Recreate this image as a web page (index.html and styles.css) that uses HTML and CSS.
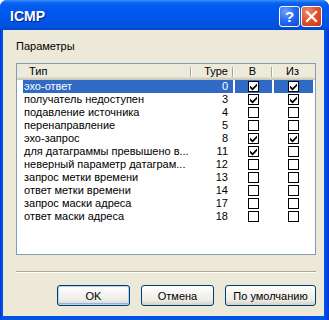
FILE: index.html
```html
<!DOCTYPE html>
<html lang="ru">

<head>
  <meta charset="UTF-8" />
  <title>ICMP</title>
  <link rel="stylesheet" href="styles.css">
</head>

<body>
  <div class="window">
    <div class="titlebar">
      <span class="title">ICMP</span>
      <div class="tb-buttons">
        <span class="tb-btn help">?</span>
        <span class="tb-btn close">
          <svg width="13" height="13" viewBox="0 0 13 13">
            <path d="M2 2 L11 11 M11 2 L2 11" stroke="#fff" stroke-width="2.2" stroke-linecap="square" />
          </svg>
        </span>
      </div>
    </div>

    <div class="client">
      <div class="label">Параметры</div>

      <div class="listbox">
        <div class="header">
          <div class="h h-name">Тип</div>
          <div class="h h-num">Type</div>
          <div class="h h-chk">В</div>
          <div class="h h-chk last">Из</div>
        </div>

        <div class="row sel">
          <div class="c name">эхо-ответ</div>
          <div class="c num">0</div>
          <div class="c chk"><span class="box on"></span></div>
          <div class="c chk"><span class="box on"></span></div>
        </div>
        <div class="row">
          <div class="c name">получатель недоступен</div>
          <div class="c num">3</div>
          <div class="c chk"><span class="box on"></span></div>
          <div class="c chk"><span class="box on"></span></div>
        </div>
        <div class="row">
          <div class="c name">подавление источника</div>
          <div class="c num">4</div>
          <div class="c chk"><span class="box"></span></div>
          <div class="c chk"><span class="box"></span></div>
        </div>
        <div class="row">
          <div class="c name">перенаправление</div>
          <div class="c num">5</div>
          <div class="c chk"><span class="box"></span></div>
          <div class="c chk"><span class="box"></span></div>
        </div>
        <div class="row">
          <div class="c name">эхо-запрос</div>
          <div class="c num">8</div>
          <div class="c chk"><span class="box on"></span></div>
          <div class="c chk"><span class="box on"></span></div>
        </div>
        <div class="row">
          <div class="c name">для датаграммы превышено в...</div>
          <div class="c num">11</div>
          <div class="c chk"><span class="box on"></span></div>
          <div class="c chk"><span class="box"></span></div>
        </div>
        <div class="row">
          <div class="c name">неверный параметр датаграм...</div>
          <div class="c num">12</div>
          <div class="c chk"><span class="box"></span></div>
          <div class="c chk"><span class="box"></span></div>
        </div>
        <div class="row">
          <div class="c name">запрос метки времени</div>
          <div class="c num">13</div>
          <div class="c chk"><span class="box"></span></div>
          <div class="c chk"><span class="box"></span></div>
        </div>
        <div class="row">
          <div class="c name">ответ метки времени</div>
          <div class="c num">14</div>
          <div class="c chk"><span class="box"></span></div>
          <div class="c chk"><span class="box"></span></div>
        </div>
        <div class="row">
          <div class="c name">запрос маски адреса</div>
          <div class="c num">17</div>
          <div class="c chk"><span class="box"></span></div>
          <div class="c chk"><span class="box"></span></div>
        </div>
        <div class="row">
          <div class="c name">ответ маски адреса</div>
          <div class="c num">18</div>
          <div class="c chk"><span class="box"></span></div>
          <div class="c chk"><span class="box"></span></div>
        </div>
      </div>

      <div class="separator"></div>

      <div class="buttons">
        <button class="btn default">OK</button>
        <button class="btn">Отмена</button>
        <button class="btn wide">По умолчанию</button>
      </div>
    </div>
  </div>
</body>

</html>
```

FILE: styles.css
```css
body {
  margin: 0;
  background: #fff;
  font-family: "Liberation Sans", Arial, sans-serif;
  font-size: 11px;
}

.window {
  width: 329px;
  height: 320px;
  box-sizing: border-box;
  border-radius: 7px 7px 0 0;
  background: linear-gradient(to right, #0831D9 0, #0055E5 2px, #0055E5 325px, #0831D9 329px);
  display: flex;
  flex-direction: column;
}

.titlebar {
  height: 30px;
  flex: none;
  border-radius: 7px 7px 0 0;
  background: linear-gradient(#3C8FFB 0, #0A62EF 3px, #005BF0 7px, #0058EE 14px, #0054E6 22px, #0050DC 27px, #0046D0 30px);
  display: flex;
  align-items: center;
  justify-content: space-between;
  padding: 0 7px 0 10px;
}

.title {
  color: #fff;
  font-weight: bold;
  font-size: 14px;
  text-shadow: 1px 1px 0 #0A1883;
  padding-top: 1px;
}

.tb-buttons {
  display: flex;
  gap: 1px;
  padding-top: 2px;
}

.tb-btn {
  width: 19px;
  height: 19px;
  border: 1px solid #fff;
  border-radius: 3px;
  display: flex;
  align-items: center;
  justify-content: center;
  color: #fff;
  font-weight: bold;
  font-size: 15px;
}

.help {
  background: radial-gradient(circle at 30% 25%, #6FA3FF 0, #2A6BF2 45%, #1246D8 100%);
}

.close {
  background: radial-gradient(circle at 30% 25%, #F08C6C 0, #E2542D 45%, #C23A12 100%);
}

.client {
  flex: 1;
  margin: 0 5px 4px 3px;
  background: #ECE9D8;
  padding: 0 0 0 13px;
}

.label {
  margin-top: 10px;
  line-height: 13px;
  color: #000;
}

.listbox {
  margin-top: 10px;
  width: 300px;
  height: 192px;
  box-sizing: border-box;
  border: 1px solid #7F9DB9;
  background: #fff;
}

.header,
.row {
  display: grid;
  grid-template-columns: 174px 42px 39px 41px;
}

.header {
  height: 16px;
  background: #EBEADB;
  box-shadow: inset 0 -1px 0 #CBC7B8, inset 0 -2px 0 #D6D2C2, inset 0 -3px 0 #E2DECD;
}

.h {
  line-height: 15px;
  position: relative;
}

.h::after {
  content: "";
  position: absolute;
  right: 0;
  top: 3px;
  height: 10px;
  width: 1px;
  background: #ACA899;
  box-shadow: 1px 0 0 #fff;
}

.h.last::after {
  display: none;
}

.h-name {
  padding-left: 12px;
}

.h-num {
  text-align: right;
  padding-right: 5px;
}

.h-chk {
  text-align: center;
}

.c {
  height: 13px;
  line-height: 13px;
  white-space: nowrap;
  overflow: hidden;
}

.name {
  margin-left: 6px;
  padding-left: 1px;
}

.num {
  text-align: right;
  padding-right: 5px;
}

.chk {
  border-left: 2px solid #fff;
  display: flex;
  justify-content: center;
  align-items: center;
}

.sel .c {
  background: #316AC5;
  color: #fff;
}

.box {
  width: 9px;
  height: 9px;
  border: 1px solid #000;
  background: #fff;
  margin-left: -1px;
}

.box.on {
  background: #fff url("data:image/svg+xml,%3Csvg xmlns='http://www.w3.org/2000/svg' width='9' height='9'%3E%3Cpath d='M1 3.5 L3.5 6 L8 1.5 L8 4 L3.5 8.5 L1 6 Z' fill='%23000'/%3E%3C/svg%3E") no-repeat;
}

.separator {
  margin-top: 16px;
  width: 300px;
  height: 1px;
  background: #ACA899;
  border-bottom: 1px solid #fff;
}

.buttons {
  display: flex;
  gap: 11px;
  margin-top: 12px;
  padding-left: 41px;
}

.btn {
  width: 73px;
  height: 21px;
  border: 1px solid #003C74;
  border-radius: 3px;
  background: linear-gradient(#FFFFFF 0, #F5F4EF 40%, #ECEBE6 75%, #D6D0C5 100%);
  font-family: "Liberation Sans", Arial, sans-serif;
  font-size: 11px;
  color: #000;
  padding: 0;
}

.btn.default {
  box-shadow: inset 0 0 0 1px #B7D0F5, inset 0 -1px 0 1px #8FB2EE;
}

.btn.wide {
  width: 91px;
}
```
